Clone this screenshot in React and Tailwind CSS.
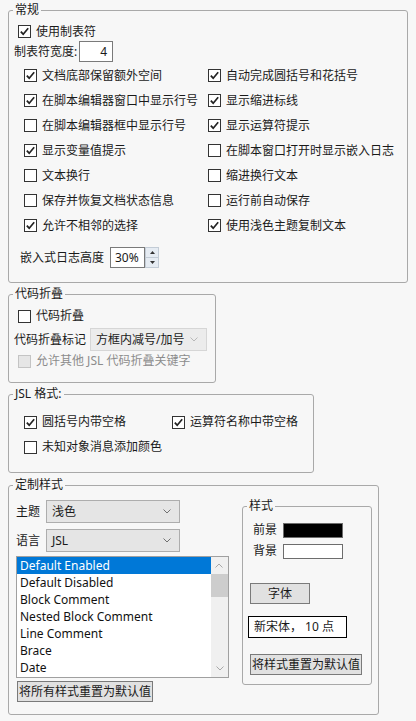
import React from "react";

const LEFT = [
  ["文档底部保留额外空间", true],
  ["在脚本编辑器窗口中显示行号", true],
  ["在脚本编辑器框中显示行号", false],
  ["显示变量值提示", true],
  ["文本换行", false],
  ["保存并恢复文档状态信息", false],
  ["允许不相邻的选择", true],
];
const RIGHT = [
  ["自动完成圆括号和花括号", true],
  ["显示缩进标线", true],
  ["显示运算符提示", true],
  ["在脚本窗口打开时显示嵌入日志", false],
  ["缩进换行文本", false],
  ["运行前自动保存", false],
  ["使用浅色主题复制文本", true],
];
const STYLES = [
  "Default Enabled",
  "Default Disabled",
  "Block Comment",
  "Nested Block Comment",
  "Line Comment",
  "Brace",
  "Date",
];

function Check({ checked, disabled }) {
  return (
    <span
      className={`w-[13px] h-[13px] shrink-0 border flex items-center justify-center ${
        disabled ? "border-[#c4c4c4] bg-[#e6e6e6]" : "border-[#333] bg-white"
      }`}
    >
      {checked && (
        <svg width="11" height="11" viewBox="0 0 11 11">
          <path d="M1.8 5.6 L4.2 8.2 L9.2 2.2" fill="none" stroke="#222" strokeWidth="1.7" />
        </svg>
      )}
    </span>
  );
}

function CheckRow({ label, checked, disabled, className = "" }) {
  return (
    <div className={`flex items-center gap-[5px] ${className}`}>
      <Check checked={checked} disabled={disabled} />
      <span className={`whitespace-nowrap ${disabled ? "text-[#8c8c8c]" : ""}`}>{label}</span>
    </div>
  );
}

function Chevron({ color = "#707070" }) {
  return (
    <svg width="8" height="5" viewBox="0 0 8 5">
      <path d="M0.5 0.5 L4 4 L7.5 0.5" fill="none" stroke={color} strokeWidth="1" />
    </svg>
  );
}

function Select({ value, className = "", disabled }) {
  return (
    <div
      className={`flex items-center justify-between pl-[5px] pr-[8px] border ${
        disabled ? "border-[#d6d6d6] bg-[#ececec]" : "border-[#adadad] bg-[#e5e5e5]"
      } ${className}`}
    >
      <span className="whitespace-nowrap">{value}</span>
      <Chevron color={disabled ? "#b8b8b8" : "#707070"} />
    </div>
  );
}

function Group({ title, className = "", children }) {
  return (
    <fieldset className={`border border-[#a9a9a9] rounded-[3px] ${className}`}>
      <legend className="ml-[4px] px-[2px] leading-[16px]">{title}</legend>
      {children}
    </fieldset>
  );
}

function Button({ children, className = "" }) {
  return (
    <div
      className={`flex items-center justify-center bg-[#e1e1e1] border border-[#7a7a7a] whitespace-nowrap ${className}`}
    >
      {children}
    </div>
  );
}

export default function App() {
  return (
    <div className="w-[416px] h-[721px] bg-[#f7f7f7] text-[#1a1a1a] text-[12px] leading-[16px] font-['Noto_Sans','Noto_Sans_CJK_SC',sans-serif] pt-[2px] pl-[8px] overflow-hidden">
      {/* 常规 */}
      <Group title="常规" className="w-[400px] h-[281px]">
        <CheckRow label="使用制表符" checked className="ml-[9px] mt-[4px] h-[19px]" />
        <div className="flex items-center ml-[5px] h-[21px]">
          <span className="w-[65px] whitespace-nowrap">制表符宽度:</span>
          <div className="w-[34px] h-[21px] bg-white border border-[#7a7a7a] flex items-center justify-end pr-[5px]">4</div>
        </div>
        <div className="grid grid-cols-[184px_1fr] ml-[15px] mt-[1px]">
          {LEFT.map((l, i) => (
            <React.Fragment key={i}>
              <CheckRow label={l[0]} checked={l[1]} className="h-[25px]" />
              <CheckRow label={RIGHT[i][0]} checked={RIGHT[i][1]} className="h-[25px]" />
            </React.Fragment>
          ))}
        </div>
        <div className="flex items-center ml-[11px] mt-[9px] h-[21px]">
          <span className="w-[90px] whitespace-nowrap">嵌入式日志高度</span>
          <div className="w-[35px] h-[21px] bg-white border border-[#7a7a7a] flex items-center pl-[4px]">30%</div>
          <div className="w-[14px] h-[21px] flex flex-col">
            <div className="flex-1 bg-[#e6ecf3] border border-[#c3ccd6] flex items-center justify-center">
              <svg width="5" height="3" viewBox="0 0 5 3"><path d="M0 3 L2.5 0 L5 3Z" fill="#333" /></svg>
            </div>
            <div className="flex-1 bg-[#e6ecf3] border border-t-0 border-[#c3ccd6] flex items-center justify-center">
              <svg width="5" height="3" viewBox="0 0 5 3"><path d="M0 0 L2.5 3 L5 0Z" fill="#333" /></svg>
            </div>
          </div>
        </div>
      </Group>

      {/* 代码折叠 */}
      <Group title="代码折叠" className="w-[208px] h-[97px] mt-[3px]">
        <CheckRow label="代码折叠" className="ml-[9px] mt-[4px] h-[20px]" />
        <div className="flex items-center ml-[5px] mt-[2px] h-[23px]">
          <span className="w-[76px] whitespace-nowrap">代码折叠标记</span>
          <Select value="方框内减号/加号" disabled className="w-[117px] h-[23px]" />
        </div>
        <CheckRow label="允许其他 JSL 代码折叠关键字" disabled className="ml-[9px] mt-[1px] h-[18px]" />
      </Group>

      {/* JSL 格式 */}
      <Group title="JSL 格式:" className="w-[306px] h-[87px] mt-[3px]">
        <div className="grid grid-cols-[148px_1fr] ml-[15px] mt-[10px] gap-y-[5px]">
          <CheckRow label="圆括号内带空格" checked className="h-[20px]" />
          <CheckRow label="运算符名称中带空格" checked className="h-[20px]" />
          <CheckRow label="未知对象消息添加颜色" className="h-[20px]" />
        </div>
      </Group>

      {/* 定制样式 */}
      <Group title="定制样式" className="w-[371px] h-[238px] mt-[4px]">
        <div className="flex ml-[7px]">
          <div className="w-[213px] flex flex-col">
            <div className="flex items-center mt-[7px] h-[23px]">
              <span className="w-[30px] whitespace-nowrap">主题</span>
              <Select value="浅色" className="w-[134px] h-[23px]" />
            </div>
            <div className="flex items-center mt-[6px] h-[23px]">
              <span className="w-[30px] whitespace-nowrap">语言</span>
              <Select value="JSL" className="w-[134px] h-[23px]" />
            </div>
            <div className="mt-[4px] h-[122px] border border-[#a0a0a0] bg-white flex">
              <div className="flex-1 flex flex-col">
                {STYLES.map((s, i) => (
                  <div
                    key={s}
                    className={`h-[17px] pl-[3px] flex items-center whitespace-nowrap ${
                      i === 0 ? "bg-[#0078d7] text-white" : "text-[#111]"
                    }`}
                  >
                    {s}
                  </div>
                ))}
              </div>
              <div className="w-[17px] bg-[#f0f0f0] flex flex-col">
                <div className="h-[17px] flex items-center justify-center rotate-180">
                  <Chevron color="#a8a8a8" />
                </div>
                <div className="h-[23px] bg-[#cdcdcd]" />
                <div className="flex-1" />
                <div className="h-[17px] flex items-center justify-center">
                  <Chevron color="#a8a8a8" />
                </div>
              </div>
            </div>
            <Button className="mt-[3px] w-[136px] h-[21px] ml-[1px]">将所有样式重置为默认值</Button>
          </div>

          <Group title="样式" className="w-[130px] h-[187px] ml-[13px] mt-[5px]">
            <div className="flex items-center ml-[10px] mt-[8px] h-[16px]">
              <span className="w-[30px]">前景</span>
              <div className="w-[60px] h-[15px] bg-black border border-[#6d6d6d]" />
            </div>
            <div className="flex items-center ml-[10px] mt-[5px] h-[16px]">
              <span className="w-[30px]">背景</span>
              <div className="w-[60px] h-[15px] bg-white border border-[#6d6d6d]" />
            </div>
            <Button className="ml-[7px] mt-[24px] w-[60px] h-[21px]">字体</Button>
            <div className="ml-[5px] mt-[12px] w-[99px] h-[22px] bg-white border border-black flex items-center pl-[5px] whitespace-nowrap">
              新宋体， 10 点
            </div>
            <Button className="ml-[7px] mt-[16px] w-[112px] h-[21px]">将样式重置为默认值</Button>
          </Group>
        </div>
      </Group>
    </div>
  );
}
